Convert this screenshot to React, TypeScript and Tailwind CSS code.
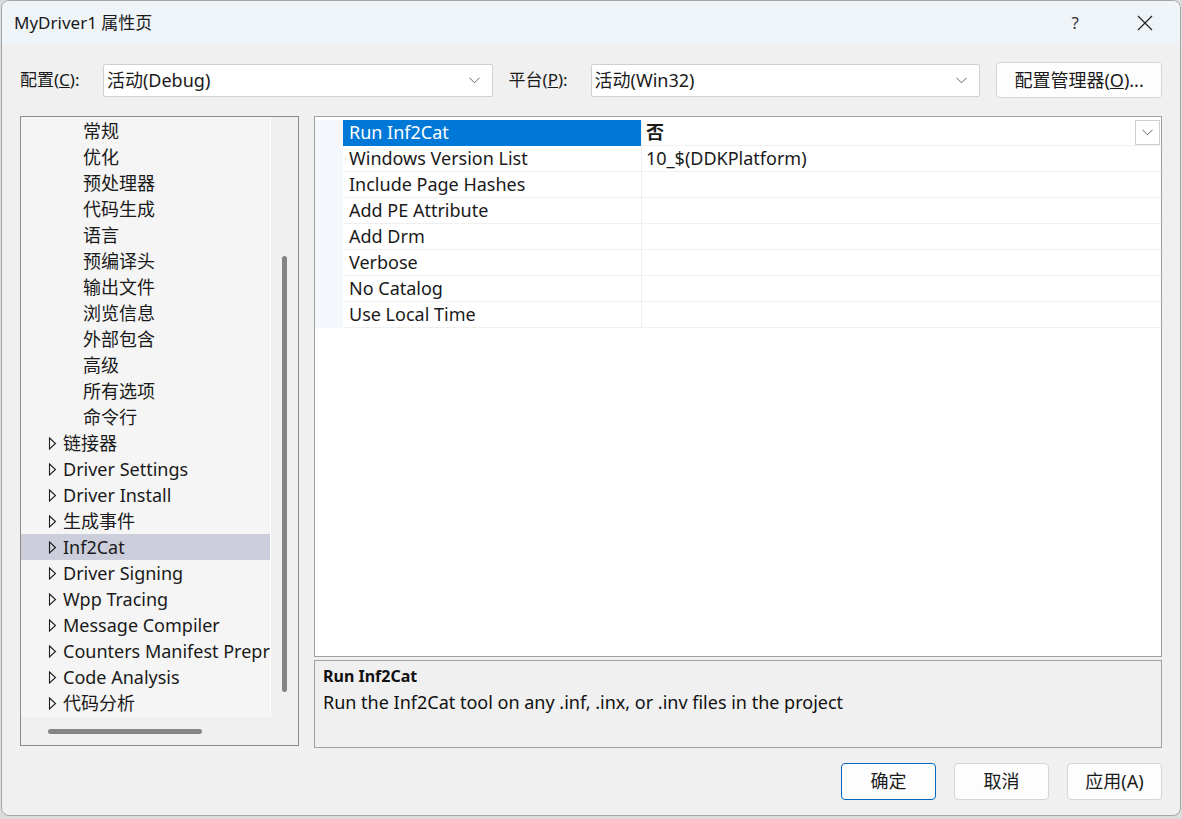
import React from "react";

const F = { fontFamily: '"Noto Sans", "Noto Sans CJK SC", sans-serif' };

function Chevron({ className = "" }: { className?: string }) {
  return (
    <svg width="11" height="7" viewBox="0 0 11 7" className={className}>
      <path d="M0.5 0.8 L5.5 5.8 L10.5 0.8" fill="none" stroke="#606060" strokeWidth="1" />
    </svg>
  );
}

function Arrow() {
  return (
    <svg width="9" height="13" viewBox="0 0 9 13" className="shrink-0">
      <path d="M1.5 1 L7.5 6.5 L1.5 12 Z" fill="none" stroke="#1e1e1e" strokeWidth="1.1" />
    </svg>
  );
}

type Item = { label: string; arrow?: boolean; selected?: boolean };

const tree: Item[] = [
  { label: "常规" },
  { label: "优化" },
  { label: "预处理器" },
  { label: "代码生成" },
  { label: "语言" },
  { label: "预编译头" },
  { label: "输出文件" },
  { label: "浏览信息" },
  { label: "外部包含" },
  { label: "高级" },
  { label: "所有选项" },
  { label: "命令行" },
  { label: "链接器", arrow: true },
  { label: "Driver Settings", arrow: true },
  { label: "Driver Install", arrow: true },
  { label: "生成事件", arrow: true },
  { label: "Inf2Cat", arrow: true, selected: true },
  { label: "Driver Signing", arrow: true },
  { label: "Wpp Tracing", arrow: true },
  { label: "Message Compiler", arrow: true },
  { label: "Counters Manifest Preprocessor", arrow: true },
  { label: "Code Analysis", arrow: true },
  { label: "代码分析", arrow: true },
];

const props: { name: string; value?: string }[] = [
  { name: "Run Inf2Cat", value: "否" },
  { name: "Windows Version List", value: "10_$(DDKPlatform)" },
  { name: "Include Page Hashes" },
  { name: "Add PE Attribute" },
  { name: "Add Drm" },
  { name: "Verbose" },
  { name: "No Catalog" },
  { name: "Use Local Time" },
];

function Combo({ text }: { text: string }) {
  return (
    <div className="w-[390px] h-[33px] bg-white border border-[#d0d0d0] rounded-[2px] flex items-center pl-[3px] pr-[12px]">
      <span className="flex-1 text-[18px] text-[#1a1a1a]">{text}</span>
      <Chevron />
    </div>
  );
}

function Btn({ children, primary = false }: { children: React.ReactNode; primary?: boolean }) {
  return (
    <div
      className={
        "w-[95px] h-[37px] rounded-[4px] bg-[#fdfdfd] flex items-center justify-center text-[18px] text-[#1a1a1a] " +
        (primary ? "border border-[#0067c0]" : "border border-[#d5d5d5]")
      }
    >
      {children}
    </div>
  );
}

export default function App() {
  return (
    <div className="w-[1182px] h-[819px] bg-[#dcdcdc] overflow-hidden" style={F}>
      <div className="ml-[1px] w-[1180px] h-[816px] rounded-[8px] border border-[#a6a6a6] bg-[#f0f0f0] overflow-hidden flex flex-col">
        {/* Title bar */}
        <div className="h-[43px] bg-[#eff4f9] flex items-center shrink-0">
          <span className="ml-[12px] text-[17px] text-[#1a1a1a]">MyDriver1 属性页</span>
          <span className="ml-auto text-[17px] text-[#333] mr-[58px]">?</span>
          <svg width="16" height="16" viewBox="0 0 16 16" className="mr-[27px]">
            <path d="M1 1 L15 15 M15 1 L1 15" stroke="#222" strokeWidth="1.2" />
          </svg>
        </div>

        {/* Body */}
        <div className="flex-1 flex flex-col px-[18px] pt-[18px]">
          {/* Config row */}
          <div className="h-[36px] flex items-center">
            <span className="w-[83px] text-[17px] text-[#1a1a1a]">
              配置(<span className="underline">C</span>):
            </span>
            <Combo text="活动(Debug)" />
            <span className="ml-[16px] w-[82px] text-[17px] text-[#1a1a1a]">
              平台(<span className="underline">P</span>):
            </span>
            <Combo text="活动(Win32)" />
            <div className="ml-[16px] w-[166px] h-[36px] rounded-[4px] bg-[#fdfdfd] border border-[#d5d5d5] flex items-center justify-center text-[18px] text-[#1a1a1a]">
              配置管理器(<span className="underline">O</span>)...
            </div>
          </div>

          {/* Panels */}
          <div className="mt-[18px] flex gap-[15px]">
            {/* Tree */}
            <div className="w-[279px] h-[630px] border border-[#8c8c8c] flex flex-col bg-[#f0f0f0] shrink-0">
              <div className="flex h-[600px]">
                <div className="w-[250px] bg-[#f5f5f5] overflow-hidden pt-[1px] border-r border-white">
                  {tree.map((it) => (
                    <div
                      key={it.label}
                      className={
                        "h-[26px] flex items-center whitespace-nowrap text-[18px] text-[#1a1a1a] " +
                        (it.selected ? "bg-[#cccedb]" : "")
                      }
                    >
                      {it.arrow ? (
                        <>
                          <span className="ml-[27px] mr-[6px] flex items-center">
                            <Arrow />
                          </span>
                          <span>{it.label}</span>
                        </>
                      ) : (
                        <span className="ml-[62px]">{it.label}</span>
                      )}
                    </div>
                  ))}
                </div>
                <div className="flex-1 flex justify-center">
                  <div className="mt-[139px] w-[5px] h-[436px] rounded-full bg-[#858585]" />
                </div>
              </div>
              <div className="flex-1 flex items-center">
                <div className="ml-[27px] w-[154px] h-[5px] rounded-full bg-[#858585]" />
              </div>
            </div>

            {/* Right column */}
            <div className="flex-1 flex flex-col gap-[3px]">
              {/* Grid */}
              <div className="h-[541px] border border-[#a0a0a0] bg-white pt-[3px]">
                {props.map((p, i) => (
                  <div key={p.name} className="h-[26px] flex text-[18px] text-[#1a1a1a]">
                    <div className="w-[28px] bg-[#f4f7fb]" />
                    <div
                      className={
                        "w-[298px] flex items-center pl-[6px] border-b " +
                        (i === 0 ? "bg-[#0078d7] text-white border-[#0078d7]" : "border-[#f0f0f0]")
                      }
                    >
                      {p.name}
                    </div>
                    <div className="flex-1 flex items-center pl-[4px] border-l border-b border-[#f0f0f0] relative">
                      <span className={i === 0 ? "font-bold" : ""}>{p.value}</span>
                      {i === 0 && (
                        <div className="ml-auto mr-[1px] w-[25px] h-[25px] bg-white border border-[#d0d0d0] flex items-center justify-center">
                          <Chevron />
                        </div>
                      )}
                    </div>
                  </div>
                ))}
              </div>
              {/* Description */}
              <div className="h-[88px] border border-[#a0a0a0] bg-[#f0f0f0] px-[8px] pt-[2px] text-[18px] text-[#111] leading-[26px]">
                <div className="font-bold text-[16px]">Run Inf2Cat</div>
                <div>Run the Inf2Cat tool on any .inf, .inx, or .inv files in the project</div>
              </div>
            </div>
          </div>

          {/* Buttons */}
          <div className="mt-[15px] flex justify-end gap-[18px]">
            <Btn primary>确定</Btn>
            <Btn>取消</Btn>
            <Btn>应用(A)</Btn>
          </div>
        </div>
      </div>
    </div>
  );
}
